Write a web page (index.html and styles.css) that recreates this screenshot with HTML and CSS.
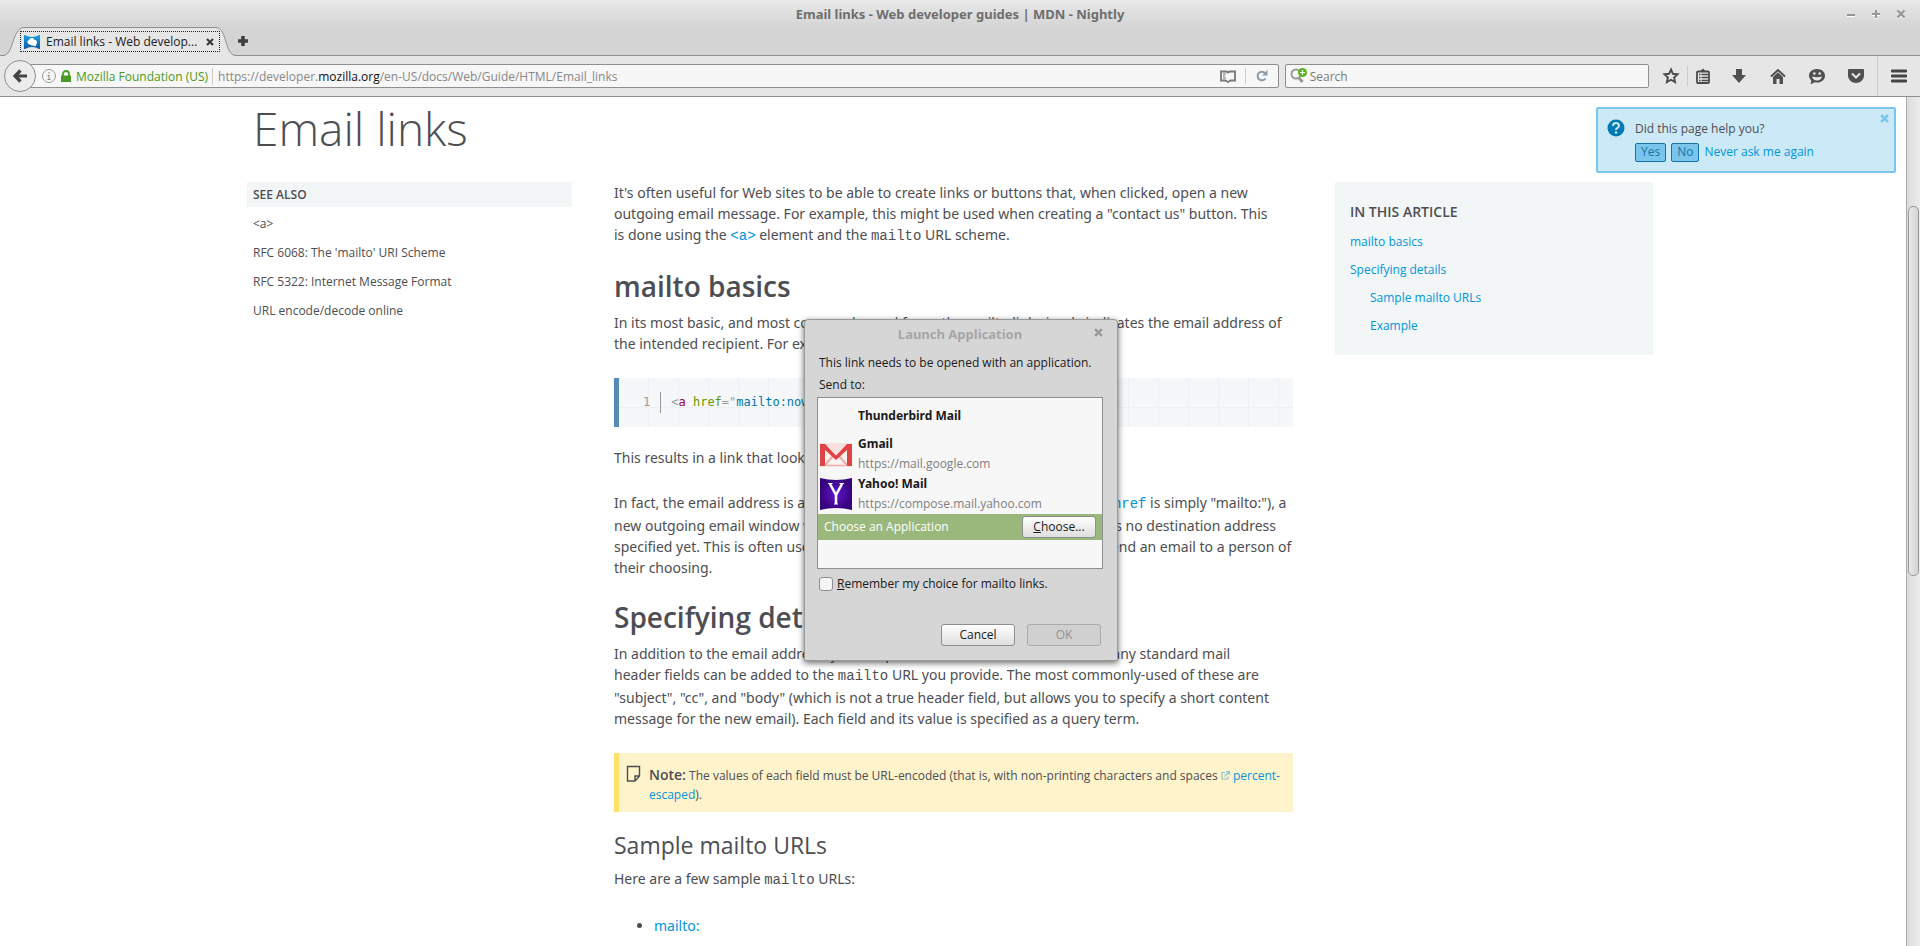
FILE: index.html
```html
<!DOCTYPE html>
<html lang="en">
<head>
<meta charset="utf-8">
<title>Email links - Web developer guides | MDN - Nightly</title>
<link rel="stylesheet" href="styles.css">
</head>
<body>
<header class="chrome">
  <div class="titlebar">
    <span class="window-title">Email links - Web developer guides | MDN - Nightly</span>
    <div class="window-controls">
      <button type="button" aria-label="Minimize"><svg width="10" height="10" viewBox="0 0 10 10"><path d="M1 7h8" stroke="#fff" stroke-width="2"/><path d="M1 6h8" stroke="#969696" stroke-width="2"/></svg></button>
      <button type="button" aria-label="Maximize"><svg width="10" height="10" viewBox="0 0 10 10"><path d="M1 6h8M5 2v8" stroke="#fff" stroke-width="2"/><path d="M1 5h8M5 1v8" stroke="#969696" stroke-width="2"/></svg></button>
      <button type="button" aria-label="Close window"><svg width="10" height="10" viewBox="0 0 10 10"><path d="M1.500 2.500l7 7M8.500 2.500l-7 7" stroke="#fff" stroke-width="2"/><path d="M1.500 1.500l7 7M8.500 1.500l-7 7" stroke="#969696" stroke-width="2.400"/></svg></button>
    </div>
  </div>
  <div class="tabstrip">
    <div class="tab">
      <svg class="tab-shape" width="236" height="30" viewBox="0 0 236 30"><path d="M0 28.500h3C14 28.500 11.500 1.500 24 .5H216C228 1.500 224 28.500 236 28.500V30H0z" fill="#e6e6e6"/><path d="M0 28.500h3C14 28.500 11.500 1.500 24 .5H216C228 1.500 224 28.500 236 28.500" fill="none" stroke="#8f8f8f"/></svg>
      <div class="tab-label">
        <svg width="16" height="14" viewBox="0 0 16 14"><defs><linearGradient id="fav" x1="0" y1="0" x2="0" y2="1"><stop offset="0" stop-color="#17a4e0"/><stop offset="1" stop-color="#1155a0"/></linearGradient></defs><path d="M0 0q2 0 3 1 5 2 10 0 1-1 3-1v14q-2 0-3-1-5-2-10 0-1 1-3 1z" fill="url(#fav)"/><path d="M3.500 7.500q-.5-2 1.500-2.500 1-2.500 4-2l1 1.500q3 .5 3 3 0 2-1.500 2.500l.5 1.500-3-1q-2 .5-3-1-2 .5-2.500-2z" fill="#fff"/></svg>
        <span>Email links - Web develop...</span>
        <button type="button" aria-label="Close tab"><svg width="8" height="8" viewBox="0 0 8 8"><path d="M1 1l6 6M7 1L1 7" stroke="#3d3d3d" stroke-width="2.200"/></svg></button>
      </div>
    </div>
    <button type="button" class="new-tab" aria-label="New tab"><svg width="10" height="10" viewBox="0 0 10 10"><path d="M0 5h10M5 0v10" stroke="#3f3f3f" stroke-width="3.600"/></svg></button>
  </div>
  <nav class="toolbar">
    <button type="button" class="back" aria-label="Back"><svg width="14" height="14" viewBox="0 0 14 14"><path d="M7.500 1.500L2 7l5.500 5.500M2 7h12" fill="none" stroke="#444" stroke-width="3.200"/></svg></button>
    <div class="urlbar">
      <svg width="14" height="14" viewBox="0 0 14 14"><circle cx="7" cy="7" r="6.500" fill="none" stroke="#999"/><path d="M7 6v5M7 3v1.800M5.500 6.500H7M5.500 10.500h3" stroke="#888"/></svg>
      <svg width="10" height="12" viewBox="0 0 10 12"><path d="M0 5.500h10V12H0z" fill="#4a9a28"/><path d="M2 6V4a3 3 0 0 1 6 0v2" fill="none" stroke="#4a9a28" stroke-width="1.800"/></svg>
      <span class="identity">Mozilla Foundation (US)</span>
      <div class="url" aria-label="Address">https://developer.<b>mozilla.org</b>/en-US/docs/Web/Guide/HTML/Email_links</div>
      <button type="button" class="reader" aria-label="Reader view"><svg width="16" height="13" viewBox="0 0 16 13"><path d="M1 1.500h4.500q1.500 0 2.500 1 1-1 2.500-1H15v9h-4.500L8 12l-2.500-1.500H1z" fill="none" stroke="#777" stroke-width="1.800"/><path d="M8 3v8" stroke="#f7f7f7"/><path d="M3 4h3M3 6h2M3 8h3" stroke="#777"/></svg></button>
      <button type="button" class="reload" aria-label="Reload"><svg width="12" height="12" viewBox="0 0 12 12"><path d="M9.500 8.500A4.300 4.300 0 1 1 9 3" fill="none" stroke="#8d99a6" stroke-width="2"/><path d="M11.500 0v5.500H6z" fill="#8d99a6"/></svg></button>
    </div>
    <label class="search">
      <svg width="18" height="16" viewBox="0 0 18 16"><circle cx="6" cy="6" r="4.500" fill="none" stroke="#999" stroke-width="2"/><path d="M8.500 9.500l4 4.500" stroke="#999" stroke-width="3"/><circle cx="12.500" cy="4.500" r="4.500" fill="#58b51b"/><path d="M10 4.500h5M12.500 2v5" stroke="#fff" stroke-width="1.200"/></svg>
      <input type="text" placeholder="Search" aria-label="Search">
    </label>
    <div class="tools">
      <button type="button" aria-label="Bookmark this page"><svg width="18" height="18" viewBox="0 0 18 18"><path d="M9 2.500l1.900 4.300 4.600.5-3.400 3.200 1 4.700L9 12.800l-4.100 2.400 1-4.700-3.400-3.200 4.600-.5z" fill="none" stroke="#4a4a4a" stroke-width="1.900"/></svg></button>
      <button type="button" class="tool-list" aria-label="Show bookmarks"><svg width="14" height="16" viewBox="0 0 14 16"><rect x="1" y="3.500" width="12" height="11.500" rx="1" fill="none" stroke="#4a4a4a" stroke-width="1.800"/><path d="M4 3.500L7 .5l3 3z" fill="#4a4a4a"/><path d="M3 6.500h1.500M3 9.500h1.500M3 12.500h1.500M5.500 6.500H12M5.500 9.500H12M5.500 12.500H12" stroke="#4a4a4a" stroke-width="1.400"/></svg></button>
      <button type="button" aria-label="Downloads"><svg width="14" height="14" viewBox="0 0 14 14"><path d="M4 0h6v6h4l-7 8-7-8h4z" fill="#505050"/></svg></button>
      <button type="button" aria-label="Home"><svg width="16" height="15" viewBox="0 0 16 15"><path d="M1 7.500L8 1l7 6.500" fill="none" stroke="#4a4a4a" stroke-width="1.800"/><path d="M3 8l5-4.700L13 8v7H9.500v-5h-3v5H3z" fill="#505050"/></svg></button>
      <button type="button" aria-label="Hello"><svg width="16" height="15" viewBox="0 0 16 15"><path d="M8 0c5 0 8 3 8 6.700S13 13.500 8 13.500c-1 0-2-.1-2.500-.3Q4 15 1 15q1.600-1.500 1.200-3.500Q0 9.500 0 6.700C0 3 3 0 8 0z" fill="#505050"/><circle cx="5.300" cy="4.500" r="1.300" fill="#e6e6e6"/><circle cx="10.700" cy="4.500" r="1.300" fill="#e6e6e6"/><path d="M3 7.500q5 1.400 10 0-1 4-5 4t-5-4z" fill="#e6e6e6"/></svg></button>
      <button type="button" aria-label="Pocket"><svg width="16" height="14" viewBox="0 0 16 14"><path d="M1 0h14q1 0 1 1v5.500C16 11 12 14 8 14S0 11 0 6.500V1q0-1 1-1z" fill="#505050"/><path d="M4 4.500l4 4 4-4" fill="none" stroke="#e6e6e6" stroke-width="2"/></svg></button>
      <button type="button" class="tool-menu" aria-label="Open menu"><svg width="16" height="14" viewBox="0 0 16 14"><path d="M1 2h14M1 7h14M1 12h14" stroke="#444" stroke-width="2.800" stroke-linecap="round"/></svg></button>
    </div>
  </nav>
</header>

<div class="viewport">
  <main class="page">
    <h1>Email links</h1>
    <div class="columns">
      <aside class="see-also">
        <h2>SEE ALSO</h2>
        <ul>
          <li><a href="#a">&lt;a&gt;</a></li>
          <li><a href="#rfc6068">RFC 6068: The 'mailto' URI Scheme</a></li>
          <li><a href="#rfc5322">RFC 5322: Internet Message Format</a></li>
          <li><a href="#encode">URL encode/decode online</a></li>
        </ul>
      </aside>
      <article class="article">
        <p>It's often useful for Web sites to be able to create links or buttons that, when clicked, open a new<br>outgoing email message. For example, this might be used when creating a "contact us" button. This<br>is done using the <a href="#a"><code>&lt;a&gt;</code></a> element and the <code>mailto</code> URL scheme.</p>
        <h2 id="basics">mailto basics</h2>
        <p>In its most basic, and most commonly used form, the mailto link simply indicates the email address of<br>the intended recipient. For example:</p>
        <div class="code-block"><span class="line-number">1</span><code><i>&lt;</i><span class="tag">a</span> <span class="attr">href</span><i>="</i><span class="value">mailto:nowhere</span></code></div>
        <p>This results in a link that looks like this:</p>
        <p>In fact, the email address is actually optional. If you leave it out (where your <a href="#href"><code>href</code></a> is simply "mailto:"), a<br>new outgoing email window will be opened by the user's email client that has no destination address<br>specified yet. This is often useful as the basis for share links that users can send an email to a person of<br>their choosing.</p>
        <h2 id="details">Specifying details</h2>
        <p>In addition to the email address, you can provide other information. In fact, any standard mail<br>header fields can be added to the <code>mailto</code> URL you provide. The most commonly-used of these are<br>"subject", "cc", and "body" (which is not a true header field, but allows you to specify a short content<br>message for the new email). Each field and its value is specified as a query term.</p>
        <div class="note">
          <svg width="16" height="18" viewBox="0 0 16 18"><path d="M1.500 1.500h12v9.500l-4.500 5h-7.500zM13.500 11H9v5" fill="none" stroke="#4d4e53" stroke-width="1.400"/></svg>
          <div><strong>Note:</strong> The values of each field must be URL-encoded (that is, with non-printing characters and spaces <svg width="9" height="9" viewBox="0 0 9 9"><path d="M4 1.500H1v6.500h6V5.500M3.500 5.500L8 1M5 .7h3.300V4" fill="none" stroke="#86c5d8" stroke-width="1.200"/></svg> <a href="#percent">percent-escaped</a>).</div>
        </div>
        <h3 id="sample">Sample mailto URLs</h3>
        <p>Here are a few sample <code>mailto</code> URLs:</p>
        <ul><li><a href="mailto:">mailto:</a></li></ul>
      </article>
      <aside class="toc">
        <h2>IN THIS ARTICLE</h2>
        <ul>
          <li><a href="#basics">mailto basics</a></li>
          <li><a href="#details">Specifying details</a></li>
          <li class="sub"><a href="#sample">Sample mailto URLs</a></li>
          <li class="sub"><a href="#example">Example</a></li>
        </ul>
      </aside>
    </div>
  </main>
  <div class="scrollbar"><div class="thumb"></div></div>

  <section class="feedback">
    <svg width="18" height="18" viewBox="0 0 18 18"><circle cx="9" cy="9" r="8.500" fill="#0079b4"/><path d="M6 7q0-3 3-3t3 2.600q0 1.400-1.500 2.300T9 11" fill="none" stroke="#cce9f7" stroke-width="2"/><circle cx="9" cy="13.500" r="1.300" fill="#cce9f7"/></svg>
    <div>
      <p>Did this page help you?</p>
      <div class="feedback-actions"><button type="button">Yes</button><button type="button">No</button><a href="#never">Never ask me again</a></div>
    </div>
    <button type="button" class="feedback-close" aria-label="Dismiss"><svg width="9" height="9" viewBox="0 0 8 8"><path d="M1 1l6 6M7 1L1 7" stroke="#79c6ec" stroke-width="2.400"/></svg></button>
  </section>
</div>

<div class="dialog" role="dialog" aria-labelledby="dialog-title">
  <div class="dialog-title">
    <span id="dialog-title">Launch Application</span>
    <button type="button" aria-label="Close dialog"><svg width="9" height="9" viewBox="0 0 8 8"><path d="M1 1l6 6M7 1L1 7" stroke="#999" stroke-width="2.200"/></svg></button>
  </div>
  <p class="dialog-text">This link needs to be opened with an application.</p>
  <p class="dialog-text">Send to:</p>
  <ul class="apps">
    <li class="app app-plain"><div class="app-icon"></div><strong>Thunderbird Mail</strong></li>
    <li class="app">
      <svg class="app-icon" width="32" height="32" viewBox="0 0 32 32"><path d="M0 6h32v22H0z" fill="#fbf3f2"/><path d="M0 6.500h32M0 27.500h32" stroke="#f3aaa6" stroke-width="1.500"/><path d="M5 27l8-9M27 27l-8-9" stroke="#f3aaa6" stroke-width="2"/><path d="M5 6h22L16 16z" fill="#f8dfdd"/><path d="M0 6h5l11 11.500L27 6h5v22h-5V12L16 22 5 12v16H0z" fill="#e04343"/></svg>
      <div><strong>Gmail</strong><span>https://mail.google.com</span></div>
    </li>
    <li class="app">
      <svg class="app-icon" width="32" height="32" viewBox="0 0 32 32"><defs><radialGradient id="yahoo"><stop offset="0" stop-color="#6214d0"/><stop offset="1" stop-color="#36037c"/></radialGradient></defs><path d="M0 0q16 4 32 0v32q-16-4-32 0z" fill="url(#yahoo)"/><path d="M10 6l6 11M22 6l-6 11v9" fill="none" stroke="#fff" stroke-width="2.600"/><path d="M8 5.500h4.500M19.500 5.500H24M14 26h4" stroke="#fff" stroke-width="1.200"/></svg>
      <div><strong>Yahoo! Mail</strong><span>https://compose.mail.yahoo.com</span></div>
    </li>
    <li class="choose"><span>Choose an Application</span><button type="button" class="button"><u>C</u>hoose...</button></li>
  </ul>
  <label class="remember"><input type="checkbox"><span><u>R</u>emember my choice for mailto links.</span></label>
  <div class="dialog-actions"><button type="button" class="button">Cancel</button><button type="button" class="button" disabled>OK</button></div>
</div>
</body>
</html>
```
FILE: styles.css
```css
* { box-sizing: border-box; }
body {
  margin: 0;
  height: 100vh;
  display: flex;
  flex-direction: column;
  overflow: hidden;
  background: #fff;
  color: #4d4e53;
  font-family: "Open Sans", "Noto Sans", sans-serif;
  font-size: 14px;
}
h1, h2, h3, p, ul { margin: 0; padding: 0; }
ul { list-style: none; }
a { color: #0095dd; text-decoration: none; }
button { border: 0; padding: 0; background: none; font: inherit; color: inherit; }
svg { flex: none; }

.chrome {
  font: 12px "Open Sans", "Noto Sans", sans-serif;
  background: linear-gradient(#e8e8e8, #d4d4d4 28px, #d4d4d4);
  border-bottom: 1px solid #8f8f8f;
}
.titlebar {
  display: grid;
  grid-template-columns: 1fr auto 1fr;
  align-items: center;
  height: 27px;
}
.window-title { grid-column: 2; font: bold 13px "Noto Sans", sans-serif; color: #6e6e6e; }
.window-controls { justify-self: end; display: flex; gap: 15px; padding-right: 14px; }
.window-controls button, .new-tab, .tab-label button { display: flex; }
.tabstrip { display: flex; align-items: stretch; height: 29px; border-bottom: 1px solid #8f8f8f; }
.tab { position: relative; width: 236px; padding: 4px 16px 3px 20px; }
.tab-shape { position: absolute; left: 0; top: 0; }
.tab-label {
  position: relative;
  display: flex;
  align-items: center;
  gap: 6px;
  height: 21px;
  padding: 0 5px 0 3px;
  border: 1px dotted #222;
  color: #222;
}
.tab-label span { flex: 1; white-space: nowrap; }
.new-tab { align-items: center; margin-left: 2px; }

.toolbar {
  display: flex;
  align-items: center;
  height: 40px;
  padding-left: 4px;
  background: #e6e6e6;
}
.back {
  display: flex;
  align-items: center;
  justify-content: center;
  width: 32px;
  height: 32px;
  border: 1px solid #8f8f8f;
  border-radius: 50%;
  background: #ececec;
  z-index: 1;
}
.urlbar, .search {
  display: flex;
  align-items: center;
  height: 24px;
  border: 1px solid #8f8f8f;
  border-radius: 2px;
  background: #f7f7f7;
}
.urlbar { flex: 1252; gap: 5px; margin-left: -7px; padding-left: 12px; }
.identity { color: #4a9a18; padding-right: 4px; border-right: 1px solid #ccc; }
.url { flex: 1; color: #888; }
.url b { font-weight: normal; color: #111; }
.reader, .reload { display: flex; align-items: center; height: 16px; }
.reader { padding-right: 4px; }
.reload { padding: 0 10px; border-left: 1px solid #ccc; }
.search { flex: 363; gap: 2px; margin-left: 6px; padding-left: 4px; }
.search input { flex: 1; min-width: 0; border: 0; padding: 0; background: none; font: inherit; }
.search input::placeholder { color: #7a7a7a; }
.tools { display: flex; align-items: center; align-self: stretch; padding-right: 13px; margin-left: 12px; }
.tools button { display: flex; align-items: center; justify-content: center; width: 39px; height: 20px; }
.tools button:first-child { width: 20px; }
.tools .tool-list { width: 32px; border-left: 1px solid #ccc; margin-left: 6px; padding-right: 2px; }
.tools .tool-menu { width: 30px; height: 40px; border-left: 1px solid #ccc; padding-left: 13px; margin-left: 2px; }

.viewport { position: relative; flex: 1; min-height: 0; display: flex; overflow: hidden; }
.page { flex: 1; padding: 0 253px 0 247px; }
.page h1 { margin-left: 6px; padding: 1px 0 24px; font-size: 46px; line-height: 60px; font-weight: 300; }
.columns { display: grid; grid-template-columns: 325fr 679fr 318fr; gap: 42px; align-items: start; }
.scrollbar {
  width: 14px;
  border-left: 1px solid #aaa;
  padding: 109px 1px 0;
  background: linear-gradient(90deg, #dcdcdc, #ececec);
}
.thumb { height: 50%; border: 1px solid #999; border-radius: 5px; background: linear-gradient(90deg, #e8e8e8, #d4d4d4); }

.see-also { font-size: 12px; }
.see-also h2 { padding: 0 6px; font-size: 12px; line-height: 25px; font-weight: 600; background: #f2f6f7; }
.see-also ul { padding: 2px 6px; }
.see-also li { line-height: 29px; }
.see-also a { color: #4d4e53; }

.article { line-height: 21px; font-family: "Noto Sans", "Open Sans", sans-serif; white-space: nowrap; }
.article code { font-family: "Liberation Mono", monospace; font-size: 14px; }
.article p { margin-bottom: 24px; }
.article h2, .article h3 { font-family: "Open Sans", "Noto Sans", sans-serif; }
.article h2 { margin-bottom: 11px; font-size: 28px; line-height: 30px; font-weight: 600; }
.code-block {
  display: flex;
  align-items: center;
  gap: 10px;
  height: 49px;
  margin-bottom: 20px;
  padding-left: 24px;
  border-left: 5px solid #558abb;
  background:
    repeating-linear-gradient(90deg, transparent 0 29px, #eef1f4 29px 30px),
    repeating-linear-gradient(transparent 0 29px, #eef1f4 29px 30px),
    #f5f7f9;
}
.line-number { padding-right: 10px; border-right: 1px solid #999; color: #999; font: 12px/21px "DejaVu Sans Mono", monospace; }
.article .code-block code { font: 12px/21px "DejaVu Sans Mono", monospace; }
.code-block i { font-style: normal; color: #999; }
.tag { color: #905; }
.attr { color: #690; }
.value { color: #07a; }
.note {
  display: flex;
  gap: 7px;
  margin: 24px 0 18px;
  padding: 12px 12px 8px 7px;
  border-left: 5px solid #ffe16a;
  background: #fff3cb;
  font: 12px/19px "Open Sans", "Noto Sans", sans-serif;
  white-space: normal;
}
.note strong { font-size: 14px; font-weight: 600; }
.article h3 { margin-bottom: 8px; font-size: 23px; line-height: 30px; font-weight: 400; }
.article ul { padding-left: 40px; list-style: disc; }

.toc { padding: 18px 15px 15px; background: #f2f6f7; }
.toc h2 { font-size: 14px; line-height: 24px; font-weight: 600; margin-bottom: 4px; }
.toc li { font-size: 12px; line-height: 28px; }
.toc .sub { padding-left: 20px; }

.feedback {
  position: absolute;
  top: 10px;
  right: 24px;
  width: 300px;
  display: flex;
  gap: 10px;
  padding: 10px 9px 9px;
  border: 2px solid #79c6ec;
  border-radius: 2px;
  background: #cce9f7;
  font-size: 12px;
  line-height: 20px;
}
.feedback-actions { display: flex; align-items: center; gap: 5px; padding-top: 3px; }
.feedback-actions button { height: 19px; padding: 0 5px; line-height: 16px; border: 1px solid #1672a8; border-radius: 2px; background: #7ac5ec; color: #1672a8; }
.feedback-close { position: absolute; top: 5px; right: 5px; display: flex; }

.dialog {
  position: absolute;
  top: 319px;
  left: 804px;
  width: 314px;
  padding: 0 14px 14px 12px;
  border: 1px solid #999;
  border-radius: 4px 4px 0 0;
  background: #d6d6d6;
  box-shadow: 0 2px 6px rgba(0, 0, 0, 0.6);
  color: #1a1a1a;
  font: 12px/20px "Open Sans", "Noto Sans", sans-serif;
}
.dialog-title { position: relative; height: 33px; line-height: 28px; text-align: center; font-family: "Noto Sans", sans-serif; font-size: 13px; font-weight: bold; color: #a6a6a6; }
.dialog-title button { position: absolute; right: 0; top: 8px; display: flex; }
.dialog-text { padding-left: 2px; margin-bottom: 2px; }
.apps { height: 172px; border: 1px solid #8f8f8f; background: #f7f7f7; }
.app { display: flex; gap: 6px; align-items: center; height: 40px; padding-left: 2px; }
.app-plain { height: 36px; }
.app-icon { width: 32px; }
.app strong { font-family: "Noto Sans", sans-serif; }
.app span { display: block; color: #808080; }
.choose { display: flex; align-items: center; justify-content: space-between; height: 26px; padding: 0 6px; background: #9ab87c; color: #fff; }
.button {
  width: 74px;
  height: 22px;
  border: 1px solid #8f8f8f;
  border-radius: 3px;
  background: linear-gradient(#fff, #dedede);
  line-height: 18px;
  color: #1a1a1a;
}
.button:disabled { background: #d0d0d0; border-color: #aaa; color: #909090; }
.remember { display: flex; align-items: center; gap: 4px; padding: 5px 0 0 2px; }
.remember input { appearance: none; width: 14px; height: 14px; margin: 0; border: 1px solid #8f8f8f; border-radius: 3px; background: #f4f4f4; }
.dialog-actions { display: flex; justify-content: flex-end; gap: 12px; padding: 30px 2px 0 0; }
```
